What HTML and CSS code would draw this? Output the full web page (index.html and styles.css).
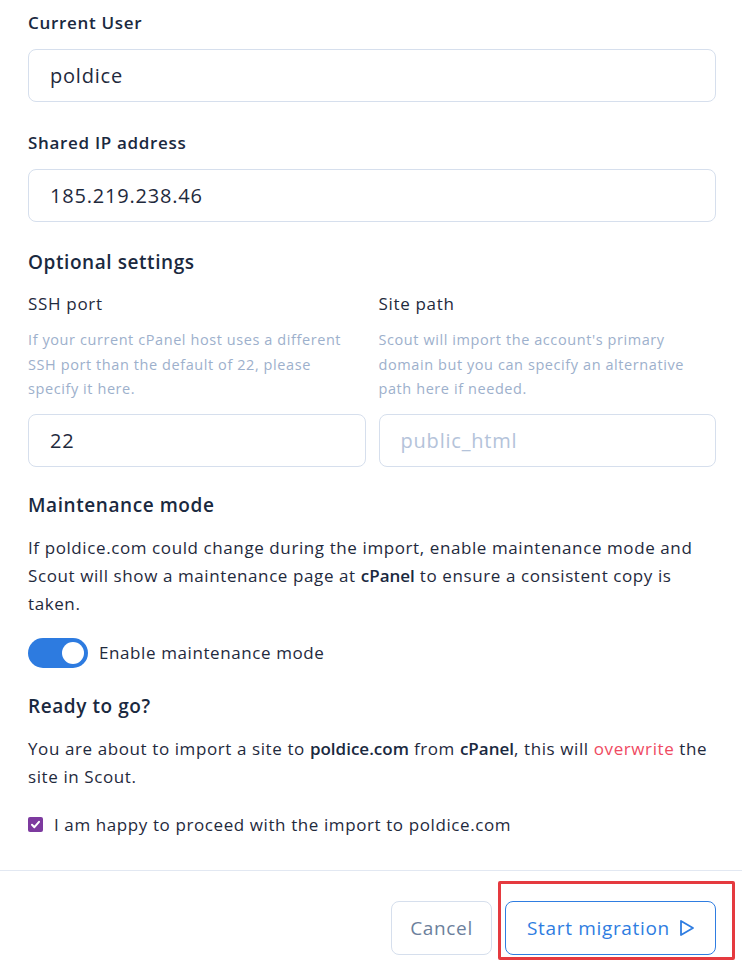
FILE: index.html
```html
<!DOCTYPE html>
<html>
<head>
<meta charset="utf-8">
<link rel="stylesheet" href="styles.css">
</head>
<body>
<div class="page">
  <div class="form">
    <div class="field">
      <div class="label">Current User</div>
      <div class="input">poldice</div>
    </div>
    <div class="field">
      <div class="label">Shared IP address</div>
      <div class="input">185.219.238.46</div>
    </div>
    <div class="section">
      <div class="heading">Optional settings</div>
      <div class="cols">
        <div class="col">
          <div class="sublabel">SSH port</div>
          <div class="help">If your current cPanel host uses a different SSH port than the default of 22, please specify it here.</div>
          <div class="input">22</div>
        </div>
        <div class="col">
          <div class="sublabel">Site path</div>
          <div class="help">Scout will import the account's primary domain but you can specify an alternative path here if needed.</div>
          <div class="input placeholder">public_html</div>
        </div>
      </div>
    </div>
    <div class="section">
      <div class="heading">Maintenance mode</div>
      <p class="para">If poldice.com could change during the import, enable maintenance mode and Scout will show a maintenance page at <b>cPanel</b> to ensure a consistent copy is taken.</p>
      <div class="toggle-row">
        <span class="toggle"><span class="knob"></span></span>
        <span class="toggle-label">Enable maintenance mode</span>
      </div>
    </div>
    <div class="section">
      <div class="heading">Ready to go?</div>
      <p class="para">You are about to import a site to <b>poldice.com</b> from <b>cPanel</b>, this will <span class="warn">overwrite</span> the site in Scout.</p>
      <div class="check-row">
        <span class="checkbox"><svg width="11" height="11" viewBox="0 0 11 11"><path d="M2 5.8 L4.4 8.2 L9 2.8" fill="none" stroke="#fff" stroke-width="2" stroke-linecap="round" stroke-linejoin="round"/></svg></span>
        <span class="check-label">I am happy to proceed with the import to poldice.com</span>
      </div>
    </div>
  </div>
  <div class="footer">
    <button class="btn btn-cancel">Cancel</button>
    <span class="highlight-wrap">
      <button class="btn btn-primary">Start migration
        <svg class="play" width="16" height="18" viewBox="0 0 16 18"><path d="M2 2 L14 9 L2 16 Z" fill="none" stroke="#2f7de1" stroke-width="1.8" stroke-linejoin="round"/></svg>
      </button>
      <span class="highlight"></span>
    </span>
  </div>
</div>
</body>
</html>
```

FILE: styles.css
```css
* { box-sizing: border-box; }
html, body { margin: 0; padding: 0; background: #fff; }
body {
  font-family: "Open Sans", "Liberation Sans", sans-serif;
  color: #1f2a3d;
  font-size: 17px;
  letter-spacing: 0.035em;
}
.page { width: 742px; }
.form {
  padding: 11px 26px 0 28px;
  display: flex;
  flex-direction: column;
}
.field { display: flex; flex-direction: column; gap: 14px; margin-bottom: 29px; }
.label {
  font-weight: 600;
  font-size: 17px;
  line-height: 24px;
  color: #1a2940;
  letter-spacing: 0.04em;
}
.input {
  height: 53px;
  border: 1px solid #d6dfed;
  border-radius: 8px;
  padding: 0 21px;
  display: flex;
  align-items: center;
  font-size: 20px;
  letter-spacing: 0.04em;
  color: #1f2a3d;
}
.input.placeholder { color: #b4c3da; }
.section { display: flex; flex-direction: column; margin-top: -2px; margin-bottom: 27px; }
.heading {
  font-size: 19px;
  font-weight: 600;
  line-height: 26px;
  color: #1a2940;
  letter-spacing: 0.03em;
}
.cols { display: grid; grid-template-columns: 1fr 1fr; gap: 13px; margin-top: 17px; }
.col { display: flex; flex-direction: column; }
.sublabel { font-size: 17px; line-height: 24px; color: #1f2a3d; letter-spacing: 0.04em; }
.help {
  margin-top: 12px;
  font-size: 14.5px;
  line-height: 24.5px;
  color: #9db0cc;
  margin-bottom: 12px;
  letter-spacing: 0.04em;
}
.para {
  margin: 16px 0 0;
  font-size: 17px;
  line-height: 28px;
  color: #1f2a3d;
}
.para b { font-weight: 600; color: #1a2940; letter-spacing: 0; }
.warn { color: #ef4a62; }
.toggle-row { display: flex; align-items: center; gap: 11px; margin-top: 20px; }
.toggle {
  width: 60px;
  height: 30px;
  border-radius: 15px;
  background: #2d7be0;
  position: relative;
  display: inline-block;
  flex-shrink: 0;
}
.knob {
  position: absolute;
  right: 4px;
  top: 4px;
  width: 22px;
  height: 22px;
  border-radius: 50%;
  background: #fff;
}
.toggle-label { font-size: 17px; line-height: 24px; color: #1f2a3d; }
.check-row { display: flex; align-items: center; gap: 11px; margin-top: 22px; }
.checkbox {
  width: 15px;
  height: 15px;
  border-radius: 2px;
  background: #7d3a9f;
  display: inline-flex;
  align-items: center;
  justify-content: center;
  flex-shrink: 0;
}
.check-label { font-size: 17px; line-height: 24px; color: #1f2a3d; }
.footer {
  margin-top: 6px;
  border-top: 1px solid #e2e8f2;
  padding: 30px 26px 12px 0;
  display: flex;
  justify-content: flex-end;
  gap: 13px;
}
.btn {
  height: 54px;
  border-radius: 8px;
  background: #fff;
  font-family: inherit;
  font-size: 19px;
  letter-spacing: 0.035em;
  display: inline-flex;
  align-items: center;
  cursor: pointer;
}
.btn-cancel {
  width: 101px;
  justify-content: center;
  border: 1px solid #d6dfed;
  color: #6c809c;
}
.btn-primary {
  width: 211px;
  padding: 0 0 0 21px;
  gap: 9px;
  border: 1px solid #2f7de1;
  color: #2f7de1;
}
.highlight-wrap { position: relative; display: inline-flex; }
.highlight {
  position: absolute;
  left: -7px;
  top: -20px;
  right: -19px;
  bottom: -5px;
  border: 3px solid #e53a3f;
  border-radius: 2px;
  pointer-events: none;
}
```
